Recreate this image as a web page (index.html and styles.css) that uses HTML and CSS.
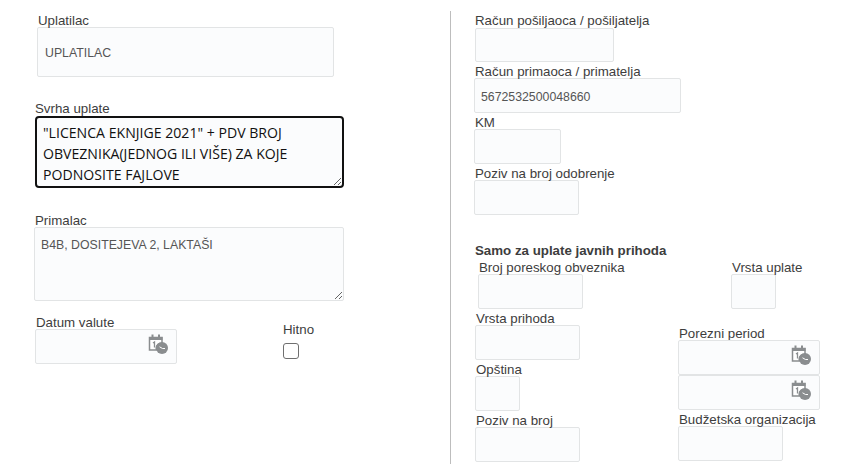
FILE: index.html
```html
<!DOCTYPE html>
<html lang="en">

<head>
    <meta charset="UTF-8">
    <title>Uplata</title>
    <link rel="stylesheet" href="styles.css">
</head>

<body>
    <svg class="icon-defs" width="0" height="0">
        <symbol id="calendarClock" viewBox="0 0 20 20">
            <path d="M1.500 3.500h12.500v6h-2.500a5 5 0 0 0-3 6.500h-7z" fill="#fff" stroke="#8a8d8f" stroke-width="1.500" />
            <rect x="1" y="3" width="13.500" height="3" fill="#8a8d8f" />
            <rect x="3.500" y="0.500" width="2" height="4" fill="#8a8d8f" />
            <rect x="10" y="0.500" width="2" height="4" fill="#8a8d8f" />
            <path d="M5 9l1.500-1v5.500" fill="none" stroke="#8a8d8f" stroke-width="1.300" />
            <circle cx="14" cy="14" r="6" fill="#8a8d8f" />
            <path d="M11.500 12.800l3 1.700h2.500" fill="none" stroke="#fff" stroke-width="1" />
        </symbol>
    </svg>

    <div class="page">
        <div class="left-col">
            <div class="field uplatilac">
                <label>Uplatilac</label>
                <input type="text" class="box box-uplatilac" value="UPLATILAC">
            </div>
            <div class="field svrha">
                <label>Svrha uplate</label>
                <textarea class="box box-svrha">"LICENCA EKNJIGE 2021" + PDV BROJ OBVEZNIKA(JEDNOG ILI VIŠE) ZA KOJE PODNOSITE FAJLOVE</textarea>
            </div>
            <div class="field primalac">
                <label>Primalac</label>
                <textarea class="box box-primalac">B4B, DOSITEJEVA 2, LAKTAŠI</textarea>
            </div>
            <div class="bottom-row">
                <div class="field datum">
                    <label>Datum valute</label>
                    <div class="date-box">
                        <input type="text" class="box">
                        <svg class="date-icon"><use href="#calendarClock" /></svg>
                    </div>
                </div>
                <div class="field hitno">
                    <label>Hitno</label>
                    <input type="checkbox" class="check">
                </div>
            </div>
        </div>

        <div class="right-col">
            <div class="field posiljalac">
                <label>Račun pošiljaoca / pošiljatelja</label>
                <input type="text" class="box w-139 h-34">
            </div>
            <div class="field">
                <label>Račun primaoca / primatelja</label>
                <input type="text" class="box w-207 text-number" value="5672532500048660">
            </div>
            <div class="field">
                <label>KM</label>
                <input type="text" class="box w-87">
            </div>
            <div class="field">
                <label>Poziv na broj odobrenje</label>
                <input type="text" class="box w-105">
            </div>

            <div class="section-title">Samo za uplate javnih prihoda</div>
            <div class="public-grid">
                <div class="public-col">
                    <div class="field broj">
                        <label>Broj poreskog obveznika</label>
                        <input type="text" class="box w-105">
                    </div>
                    <div class="field">
                        <label>Vrsta prihoda</label>
                        <input type="text" class="box w-105">
                    </div>
                    <div class="field">
                        <label>Opština</label>
                        <input type="text" class="box w-45">
                    </div>
                    <div class="field">
                        <label>Poziv na broj</label>
                        <input type="text" class="box w-105">
                    </div>
                </div>
                <div class="public-col">
                    <div class="field vrsta-uplate">
                        <label>Vrsta uplate</label>
                        <input type="text" class="box w-45">
                    </div>
                    <div class="field period">
                        <label>Porezni period</label>
                        <div class="date-box">
                            <input type="text" class="box">
                            <svg class="date-icon"><use href="#calendarClock" /></svg>
                        </div>
                        <div class="date-box">
                            <input type="text" class="box">
                            <svg class="date-icon"><use href="#calendarClock" /></svg>
                        </div>
                    </div>
                    <div class="field">
                        <label>Budžetska organizacija</label>
                        <input type="text" class="box w-105">
                    </div>
                </div>
            </div>
        </div>
    </div>
</body>

</html>
```

FILE: styles.css
```css
:root {
    --text: #3d3d3d;
    --box-text: #555;
    --box-bg: #fbfcfd;
    --box-border: #e2e4e5;
}

* {
    margin: 0;
    padding: 0;
    box-sizing: border-box;
    font-family: 'Liberation Sans', Arial, sans-serif;
}

body {
    background-color: #fff;
    color: var(--text);
    font-size: 13.300px;
    height: 100vh;
    overflow: hidden;
}

.icon-defs {
    display: block;
}

.page {
    display: flex;
    height: 100%;
    padding-top: 11px;
}

label {
    display: block;
    height: 15px;
    line-height: 18px;
    white-space: nowrap;
}

.box {
    display: block;
    width: 100%;
    height: 35px;
    background-color: var(--box-bg);
    border: 1px solid var(--box-border);
    border-radius: 2px;
    color: var(--box-text);
    font-size: 12.300px;
    outline: none;
}

/* left side */
.left-col {
    width: 450px;
    padding: 1px 0 0 34px;
}

.uplatilac {
    margin-left: 3px;
    width: 297px;
}

.uplatilac label {
    margin-left: 1px;
}

.box-uplatilac {
    height: 50px;
    padding: 2px 7px 0;
}

.svrha {
    margin: 24px 0 0 1px;
    width: 309px;
}

.svrha label {
    line-height: 16px;
}

.box-svrha {
    height: 72px;
    border: 2px solid #111;
    border-radius: 4px;
    padding: 4px 6px 0;
    font-family: 'Open Sans', sans-serif;
    font-size: 14.100px;
    line-height: 21px;
    color: #111;
    overflow: hidden;
    resize: both;
}

.primalac {
    margin-top: 24px;
    width: 310px;
}

.primalac label {
    margin-left: 1px;
}

.box-primalac {
    height: 74px;
    padding: 9px 6px;
    line-height: 16px;
    overflow: hidden;
    resize: both;
}

.bottom-row {
    display: flex;
    margin-top: 13px;
    align-items: flex-start;
}

.datum {
    margin-left: 1px;
    width: 142px;
}

.datum label {
    margin-left: 1px;
}

.hitno {
    margin: 7px 0 0 106px;
}

.check {
    display: block;
    width: 16px;
    height: 16px;
    margin-top: 7px;
    appearance: none;
    border: 1px solid #6f6f6f;
    border-radius: 3px;
    background-color: #fff;
}

/* date field with its icon */
.date-box {
    position: relative;
}

.date-icon {
    position: absolute;
    right: 9px;
    top: 5px;
    width: 20px;
    height: 20px;
}

/* right side */
.right-col {
    flex: 1;
    border-left: 1px solid #bdbdbd;
    padding: 1px 0 0 23px;
}

.right-col .field {
    margin-bottom: 1px;
}

.right-col label {
    margin-left: 1px;
}

.posiljalac {
    margin-left: 1px;
}

.right-col .posiljalac label {
    height: 16px;
    margin-left: 0;
}

.w-139 { width: 139px; }
.w-207 { width: 207px; }
.w-105 { width: 105px; }
.w-87 { width: 87px; }
.w-45 { width: 45px; }
.h-34 { height: 34px; }

.text-number {
    padding: 2px 6px 0;
}

.section-title {
    margin: 28px 0 0 1px;
    height: 16px;
    line-height: 16px;
    font-weight: 700;
}

.public-grid {
    display: grid;
    grid-template-columns: 203px 142px;
    margin-left: 1px;
}

.broj {
    margin-left: 3px;
}

.vrsta-uplate {
    margin-left: 53px;
}

.right-col .period {
    margin-top: 16px;
}
```
